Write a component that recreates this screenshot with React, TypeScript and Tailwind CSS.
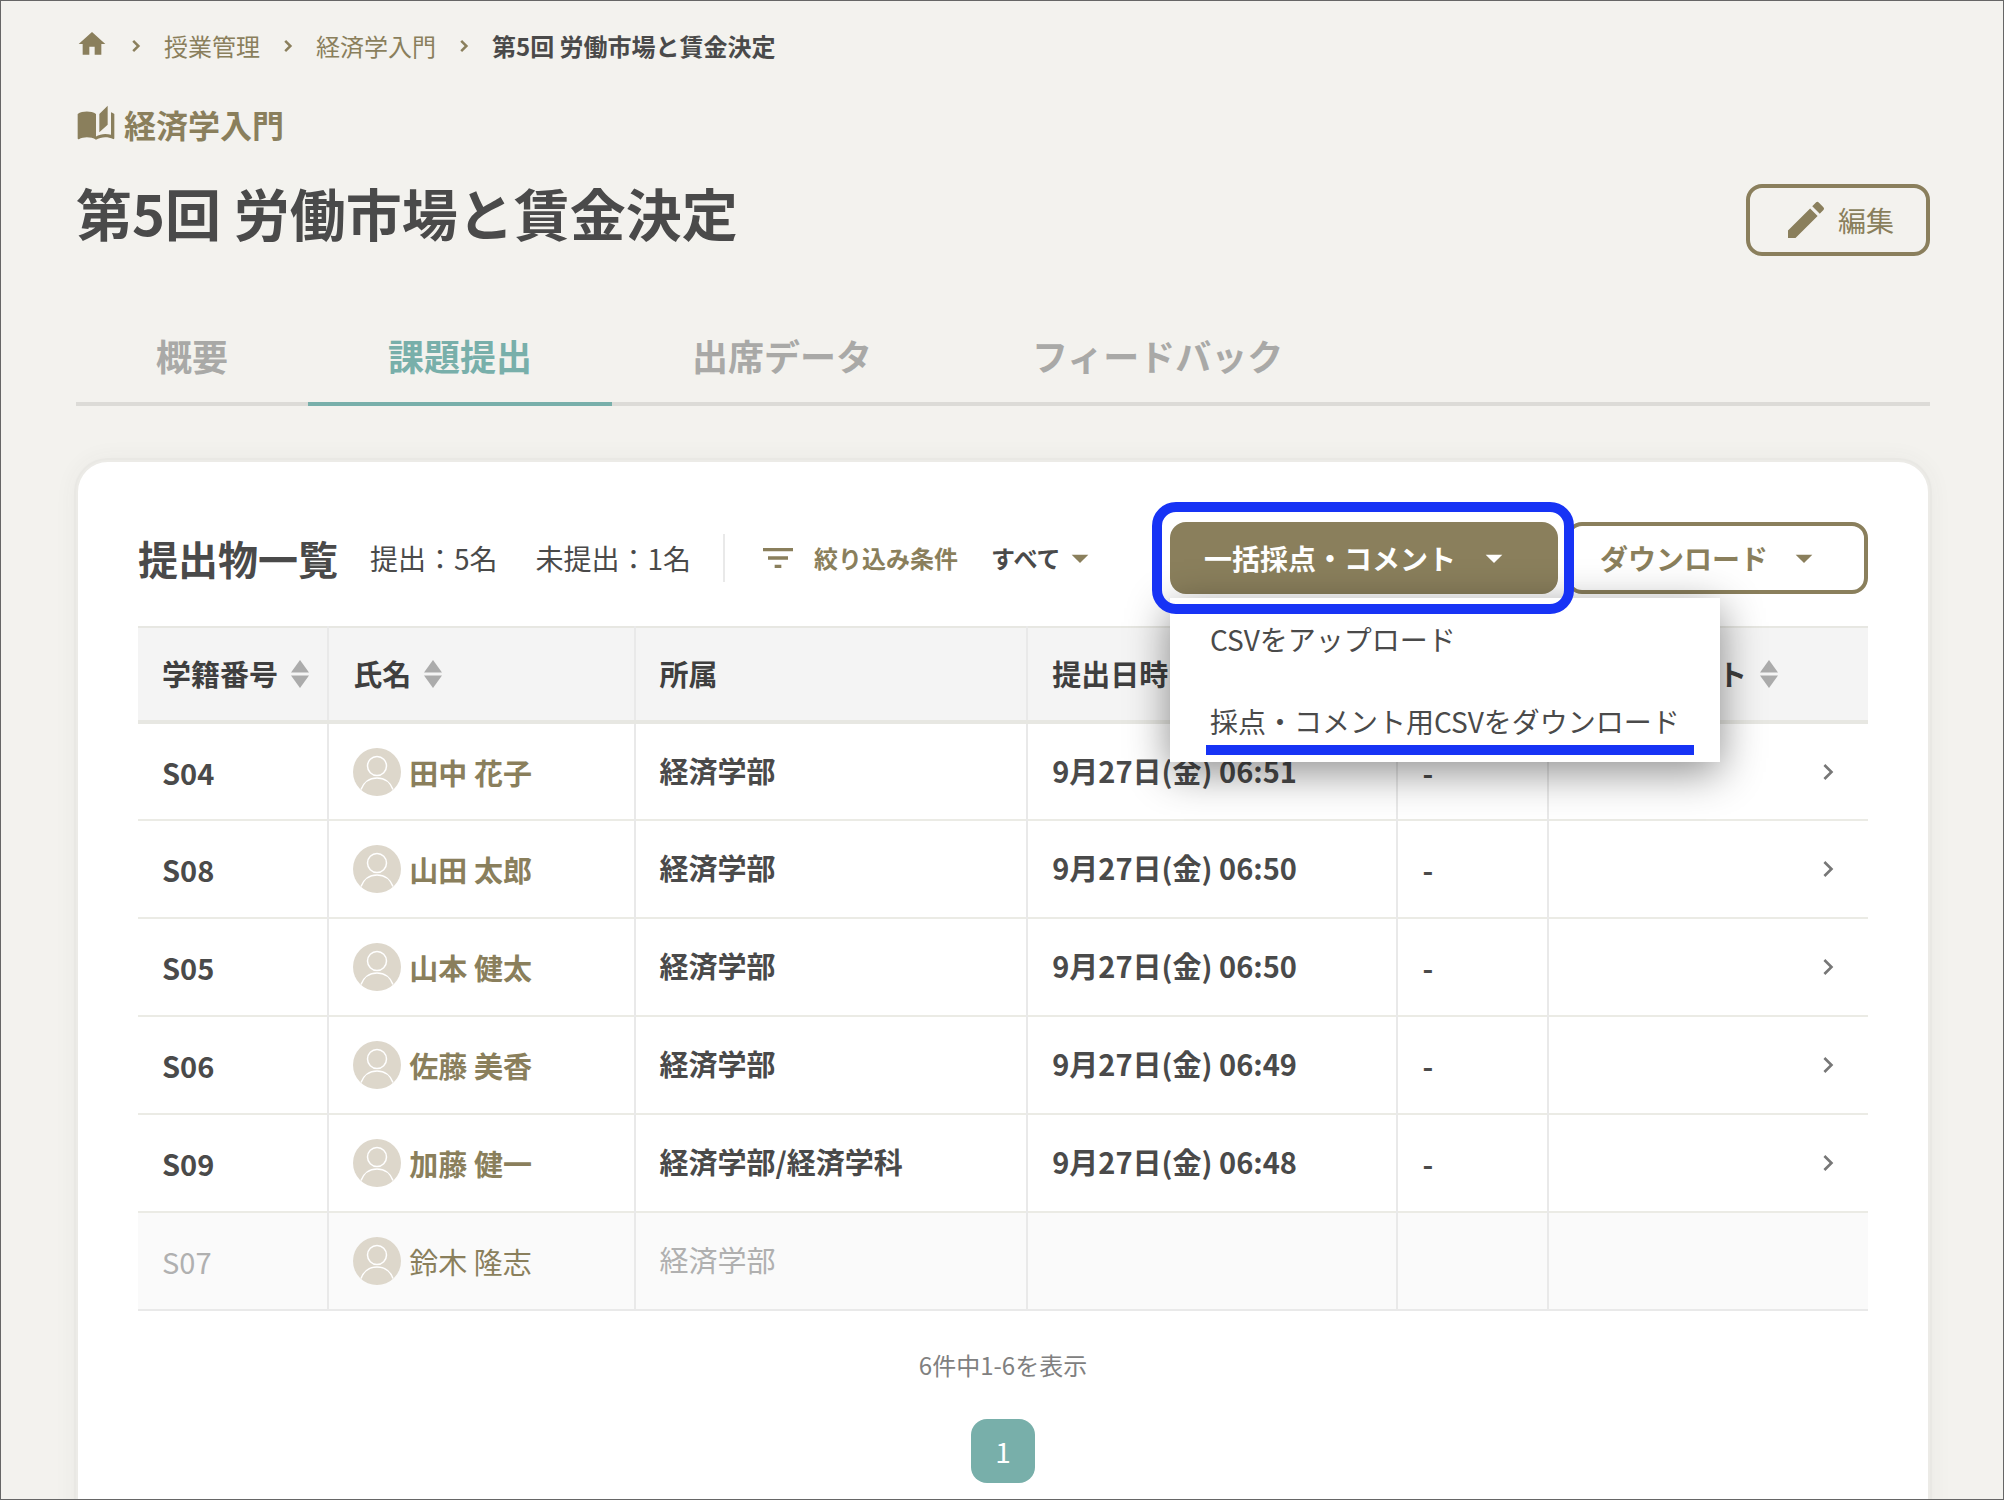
import React from "react";
import {
  MdHome,
  MdChevronRight,
  MdAutoStories,
  MdEdit,
  MdFilterList,
  MdArrowDropDown,
} from "react-icons/md";

type Submission = {
  id: string;
  name: string;
  dept: string;
  date: string;
  submitted: boolean;
};

const submissions: Submission[] = [
  { id: "S04", name: "田中 花子", dept: "経済学部", date: "9月27日(金) 06:51", submitted: true },
  { id: "S08", name: "山田 太郎", dept: "経済学部", date: "9月27日(金) 06:50", submitted: true },
  { id: "S05", name: "山本 健太", dept: "経済学部", date: "9月27日(金) 06:50", submitted: true },
  { id: "S06", name: "佐藤 美香", dept: "経済学部", date: "9月27日(金) 06:49", submitted: true },
  { id: "S09", name: "加藤 健一", dept: "経済学部/経済学科", date: "9月27日(金) 06:48", submitted: true },
  { id: "S07", name: "鈴木 隆志", dept: "経済学部", date: "", submitted: false },
];

const tabs = ["概要", "課題提出", "出席データ", "フィードバック"];

function SortIcon() {
  return (
    <svg className="h-7 w-5 shrink-0" viewBox="0 0 20 28" fill="#ababab" aria-hidden="true">
      <path d="M10 0 19 12.500H1z" />
      <path d="M10 28 1 15.500h18z" />
    </svg>
  );
}

function Avatar() {
  return (
    <svg className="size-12 shrink-0" viewBox="0 0 48 48" aria-hidden="true">
      <circle cx="24" cy="24" r="24" fill="#ddd7cb" />
      <g fill="none" stroke="#fff" strokeWidth="1.500">
        <circle cx="24" cy="18" r="9.500" />
        <path d="M8 41.500C10.500 34.500 16.500 30 24 30s13.500 4.500 16 11.500" />
      </g>
    </svg>
  );
}

function Separator() {
  return (
    <svg className="size-6 shrink-0" viewBox="0 0 24 24" fill="none" stroke="currentColor" strokeWidth="2.500" aria-hidden="true">
      <path d="M9.200 6.800 14.400 12l-5.200 5.200" />
    </svg>
  );
}

function HeaderCell({ label, sortable }: { label: string; sortable?: boolean }) {
  return (
    <th scope="col" className="h-[95px] border-r-2 border-[#e9e9e9] px-6 text-left font-bold last:border-r-0">
      {sortable ? (
        <button type="button" className="flex items-center gap-3 whitespace-nowrap">
          {label}
          <SortIcon />
        </button>
      ) : (
        <span className="whitespace-nowrap">{label}</span>
      )}
    </th>
  );
}

function Row({ item }: { item: Submission }) {
  const cell = "border-r-2 border-[#e9e9e9] px-6";
  return (
    <tr
      className={
        item.submitted
          ? "border-b-2 border-[#ebebe5] font-bold text-[#4a4a4a]"
          : "border-b-2 border-[#e9e9e9] bg-[#fafafa] font-normal text-[#b0b0b0]"
      }
    >
      <td className={cell + " h-[98px] pt-0.5"}>{item.id}</td>
      <td className={cell}>
        <a href="#student" className="flex items-center gap-2 whitespace-nowrap text-[#8a7f5c]">
          <Avatar />
          <span className="pt-0.5">{item.name}</span>
        </a>
      </td>
      <td className={cell + " pb-0.5"}>{item.dept}</td>
      <td className={cell + " pb-0.5 whitespace-nowrap"}>{item.date}</td>
      <td className={cell + " pt-0.5"}>{item.submitted ? "-" : ""}</td>
      <td className="px-6">
        {item.submitted && (
          <button type="button" aria-label="詳細" className="ml-auto block text-[#777]">
            <MdChevronRight className="size-8" />
          </button>
        )}
      </td>
    </tr>
  );
}

export default function App() {
  return (
    <div className="h-screen overflow-hidden border border-[#666] bg-[#f3f2ee] pr-[73px] pl-[75px] font-['Noto_Sans_CJK_JP',sans-serif] text-[#4a4a4a]">
      <nav aria-label="パンくずリスト" className="flex h-[90px] items-center gap-4 text-2xl text-[#8a7f5c]">
        <a href="#home" aria-label="ホーム" className="pb-1">
          <MdHome className="size-8" />
        </a>
        <Separator />
        <a href="#classes">授業管理</a>
        <Separator />
        <a href="#course">経済学入門</a>
        <Separator />
        <span className="font-bold text-[#4a4a4a]">第5回 労働市場と賃金決定</span>
      </nav>

      <header className="flex items-end justify-between">
        <div>
          <p className="flex h-[66px] items-center gap-2 text-[32px] font-bold text-[#8a7f5c]">
            <MdAutoStories className="size-10" />
            経済学入門
          </p>
          <h1 className="pt-2 text-[56px] leading-[94px] font-bold">第5回 労働市場と賃金決定</h1>
        </div>
        <button
          type="button"
          className="mb-[3px] flex h-[72px] items-center gap-2 rounded-2xl border-4 border-[#8a7f5c] px-8 text-[28px] text-[#8a7f5c]"
        >
          <MdEdit className="size-12" />
          編集
        </button>
      </header>

      <div role="tablist" className="mt-[41px] flex border-b-4 border-[#dcdbd7] text-[36px] leading-[54px] font-bold">
        {tabs.map((tab) => (
          <button
            key={tab}
            type="button"
            role="tab"
            aria-selected={tab === "課題提出"}
            className={
              tab === "課題提出"
                ? "-mb-1 border-b-4 border-[#78afaa] px-20 pt-7 pb-5 text-[#78afaa]"
                : "-mb-1 border-b-4 border-transparent px-20 pt-7 pb-5 text-[#a9a9a7]"
            }
          >
            {tab}
          </button>
        ))}
      </div>

      <main className="mt-[54px] h-[1100px] rounded-[32px] border-2 border-[#ecebe7] bg-white px-[60px] pt-[60px] shadow-[0_0_0_2px_#e9e8e4,0_0_24px_rgba(74,74,60,0.06)]">
        <div className="flex h-[72px] items-center">
          <h2 className="text-[40px] font-bold">提出物一覧</h2>
          <p className="ml-8 text-[28px]">提出：5名</p>
          <p className="ml-[38px] text-[28px]">未提出：1名</p>
          <div className="ml-8 h-12 w-0.5 bg-[#e9e9e9]" />
          <button type="button" className="ml-[33px] flex items-center gap-4 text-2xl font-bold text-[#8a7f5c]">
            <MdFilterList className="size-10" />
            絞り込み条件
          </button>
          <button type="button" className="ml-[33px] flex items-center text-2xl font-bold">
            すべて
            <MdArrowDropDown className="size-10 text-[#8a7f5c]" />
          </button>

          <div className="ml-auto flex gap-2 text-[28px] font-bold">
            <div className="relative z-10">
              <button
                type="button"
                aria-expanded="true"
                className="flex h-[72px] items-center gap-[18px] rounded-2xl bg-[#8a7f5c] pr-11 pl-[34px] whitespace-nowrap text-white"
              >
                一括採点・コメント
                <MdArrowDropDown className="size-10" />
              </button>
              <div
                role="menu"
                className="absolute top-[76px] left-0 w-[550px] bg-white font-normal shadow-[0_10px_40px_rgba(0,0,0,0.45)]"
              >
                <a href="#upload" role="menuitem" className="flex h-[82px] items-center px-10">
                  CSVをアップロード
                </a>
                <a href="#download" role="menuitem" className="flex h-[82px] items-center px-10 whitespace-nowrap">
                  採点・コメント用CSVをダウンロード
                </a>
                <div className="absolute right-[26px] bottom-[7px] left-9 h-2.5 bg-[#1733f5]" />
              </div>
              <div className="pointer-events-none absolute -inset-y-5 -right-4 -left-[18px] rounded-3xl border-10 border-[#1733f5]" />
            </div>
            <button
              type="button"
              className="flex h-[72px] items-center gap-4 rounded-2xl border-4 border-[#8a7f5c] pr-10 pl-[30px] whitespace-nowrap text-[#8a7f5c]"
            >
              ダウンロード
              <MdArrowDropDown className="size-10" />
            </button>
          </div>
        </div>

        <table className="mt-8 w-full table-fixed border-collapse text-[29px]">
          <colgroup>
            <col className="w-[11%]" />
            <col className="w-[17.7%]" />
            <col className="w-[22.7%]" />
            <col className="w-[21.4%]" />
            <col className="w-[8.7%]" />
            <col />
          </colgroup>
          <thead>
            <tr className="border-t-2 border-b-4 border-[#e7e7e2] bg-[#f4f4f4] text-[#3f3f3f]">
              <HeaderCell label="学籍番号" sortable />
              <HeaderCell label="氏名" sortable />
              <HeaderCell label="所属" />
              <HeaderCell label="提出日時" />
              <HeaderCell label="点数" />
              <HeaderCell label="採点コメント" sortable />
            </tr>
          </thead>
          <tbody>
            {submissions.map((item) => (
              <Row key={item.id} item={item} />
            ))}
          </tbody>
        </table>

        <p className="mt-[38px] text-center text-2xl text-[#808080]">6件中1-6を表示</p>
        <div className="mt-[38px] flex justify-center">
          <button type="button" aria-current="page" className="size-16 rounded-2xl bg-[#78afaa] text-[28px] text-white">
            1
          </button>
        </div>
      </main>
    </div>
  );
}
